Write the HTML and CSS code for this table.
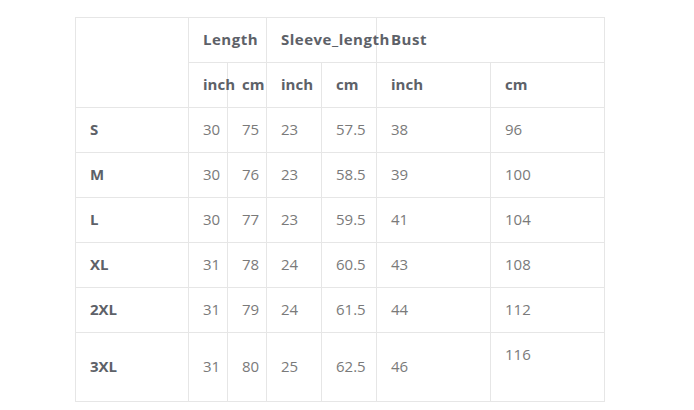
FILE: index.html
```html
<!DOCTYPE html>
<html>
<head>
<meta charset="utf-8">
<link rel="stylesheet" href="styles.css">
</head>
<body>
<div class="wrap">
<table class="chart">
<colgroup>
<col class="c-size"><col class="c-n"><col class="c-n"><col class="c-m"><col class="c-m"><col class="c-w"><col class="c-w">
</colgroup>
<thead>
<tr><th rowspan="2"></th><th colspan="2" class="group">Length</th><th colspan="2" class="group">Sleeve_length</th><th colspan="2" class="group">Bust</th></tr>
<tr><th>inch</th><th>cm</th><th>inch</th><th>cm</th><th>inch</th><th>cm</th></tr>
</thead>
<tbody>
<tr><th>S</th><td>30</td><td>75</td><td>23</td><td>57.5</td><td>38</td><td>96</td></tr>
<tr><th>M</th><td>30</td><td>76</td><td>23</td><td>58.5</td><td>39</td><td>100</td></tr>
<tr><th>L</th><td>30</td><td>77</td><td>23</td><td>59.5</td><td>41</td><td>104</td></tr>
<tr><th>XL</th><td>31</td><td>78</td><td>24</td><td>60.5</td><td>43</td><td>108</td></tr>
<tr><th>2XL</th><td>31</td><td>79</td><td>24</td><td>61.5</td><td>44</td><td>112</td></tr>
<tr><th>3XL</th><td>31</td><td>80</td><td>25</td><td>62.5</td><td>46</td><td>116<br>&nbsp;</td></tr>
</tbody>
</table>
</div>
</body>
</html>
```
FILE: styles.css
```css
html, body { margin: 0; padding: 0; background: #fff; }
.wrap { padding: 17px 0 0 75px; }
.chart {
  border-collapse: collapse;
  table-layout: fixed;
  width: 530px;
  font-family: "Open Sans", "Liberation Sans", sans-serif;
  font-size: 15px;
  line-height: 24px;
  color: #7a7a7a;
}
.c-size { width: 113px; }
.c-n { width: 39px; }
.c-m { width: 55px; }
.c-w { width: 114px; }
.chart th, .chart td {
  border: 1px solid #e6e6e6;
  padding: 9px 14px 11px;
  text-align: left;
  vertical-align: middle;
  white-space: nowrap;
  overflow: visible;
}
.chart th {
  font-weight: 700;
  color: #5d6168;
}
.chart th.group { letter-spacing: 0.5px; }
.chart td { font-weight: 400; }
```
